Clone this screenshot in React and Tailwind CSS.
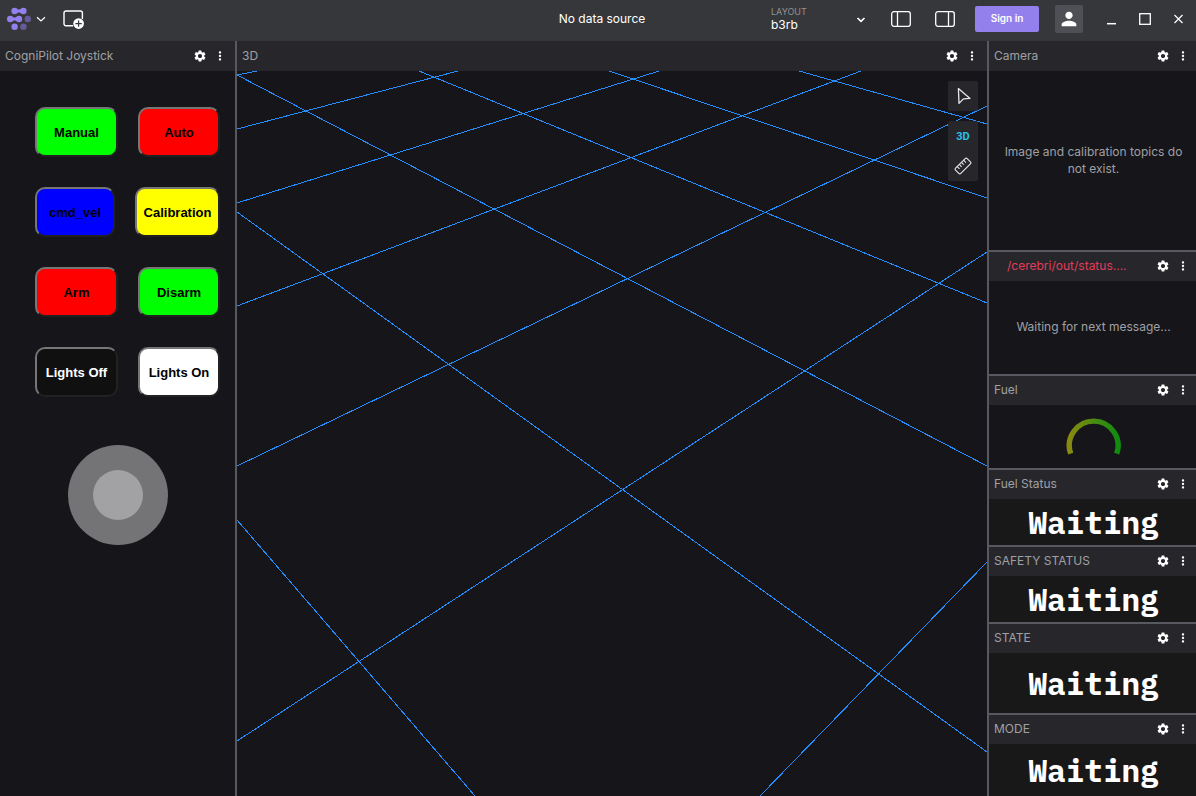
import React from "react";
import { MdSettings, MdMoreVert, MdPerson } from "react-icons/md";

function Chevron({ className = "" }) {
  return (
    <svg className={className} width="10" height="10" viewBox="0 0 10 10" fill="none" stroke="currentColor" strokeWidth="1.2" aria-hidden="true">
      <path d="M1 3.2 L5 7 L9 3.2" />
    </svg>
  );
}

function Logo() {
  return (
    <svg width="26" height="24" viewBox="0 0 26 24" aria-hidden="true">
      <g fill="#9480ed">
        <circle cx="8.6" cy="4" r="3.2" />
        <circle cx="17.4" cy="4" r="3.2" />
        <path d="M8.6 1.3 C11 3 14 3 17.4 1.3 V6.7 C14 5 11 5 8.6 6.7Z" />
        <circle cx="4.2" cy="12" r="3.2" />
        <circle cx="13" cy="12" r="3.2" />
        <path d="M4.2 9.3 C7 11 10 11 13 9.3 V14.7 C10 13 7 13 4.2 14.7Z" />
        <circle cx="8.6" cy="19.8" r="3.2" />
      </g>
      <g fill="#675a99">
        <circle cx="21.8" cy="12" r="3.2" />
        <circle cx="17.4" cy="19.8" r="3.2" />
      </g>
    </svg>
  );
}

function AddPanelIcon() {
  return (
    <svg width="22" height="20" viewBox="0 0 22 20" fill="none" aria-hidden="true">
      <path d="M10 15.8 H3 A2 2 0 0 1 1 13.8 V3 A2 2 0 0 1 3 1 H17.4 A2 2 0 0 1 19.4 3 V9" stroke="#fff" strokeWidth="1.4" />
      <circle cx="15.6" cy="13.6" r="5.3" fill="#fff" />
      <path d="M15.6 10.4 V16.8 M12.4 13.6 H18.8" stroke="#36373b" strokeWidth="1.2" />
    </svg>
  );
}

function SidebarIcon({ right = false }) {
  return (
    <svg width="20" height="16" viewBox="0 0 20 16" fill="none" stroke="#fff" strokeWidth="1.3" aria-hidden="true">
      <rect x="0.7" y="0.7" width="18.6" height="14.6" rx="2.2" />
      <path d={right ? "M13.5 1 V15" : "M6.5 1 V15"} />
    </svg>
  );
}

function TopBar() {
  return (
    <header className="grid h-[41px] shrink-0 grid-cols-[1fr_auto_1fr] items-center bg-[#36373b] pb-[3px]">
      <div className="flex items-center pl-1.5">
        <button aria-label="Menu" className="flex items-center gap-1">
          <Logo />
          <Chevron />
        </button>
        <button aria-label="Add panel" className="ml-[17px] pt-0.5">
          <AddPanelIcon />
        </button>
      </div>
      <div className="pb-0.5 pl-2">No data source</div>
      <div className="flex items-center justify-end pr-[13px]">
        <div className="relative mr-[25px] w-[95px]">
          <label htmlFor="layout" className="mb-0.5 block text-[9px] leading-[9px] text-[#929296]">LAYOUT</label>
          <select id="layout" className="block w-full appearance-none bg-transparent leading-[14px] outline-none">
            <option>b3rb</option>
          </select>
          <svg className="pointer-events-none absolute right-0 bottom-[7px]" width="10" height="10" viewBox="0 0 10 10" fill="none" stroke="#fff" strokeWidth="1.7" aria-hidden="true">
            <path d="M1.5 3 L5 6.4 L8.5 3" />
          </svg>
        </div>
        <button aria-label="Toggle left sidebar" className="mr-6"><SidebarIcon /></button>
        <button aria-label="Toggle right sidebar" className="mr-5"><SidebarIcon right /></button>
        <button className="mr-4 h-[26px] w-16 rounded-xs bg-[#9480ed] pb-px text-[10px] font-semibold">Sign in</button>
        <button aria-label="Account" className="mr-6 flex size-7 items-center justify-center rounded-xs bg-[#4f5055]">
          <MdPerson size={22} />
        </button>
        <button aria-label="Minimize" className="mr-[23px]">
          <svg width="9" height="14" viewBox="0 0 9 14" aria-hidden="true"><path d="M0 11.7 H9" stroke="#fff" strokeWidth="1.5" /></svg>
        </button>
        <button aria-label="Maximize" className="mr-[23px]">
          <svg width="12" height="12" viewBox="0 0 12 12" fill="none" aria-hidden="true"><rect x="0.7" y="0.7" width="10.6" height="10.6" stroke="#fff" strokeWidth="1.3" /></svg>
        </button>
        <button aria-label="Close">
          <svg width="9" height="10" viewBox="0 0 9 10" fill="none" aria-hidden="true"><path d="M0.5 1 L8.5 9 M8.5 1 L0.5 9" stroke="#fff" strokeWidth="1.2" /></svg>
        </button>
      </div>
    </header>
  );
}

function Panel({ title, error = false, className = "", barClass = "h-[29px] pb-px", bodyClass = "bg-[#15151a]", children }) {
  return (
    <section className={`flex min-h-0 min-w-0 basis-0 flex-col overflow-hidden ${className}`}>
      <div className={`flex shrink-0 items-center bg-[#27272b] pr-[5px] ${barClass} ${error ? "pl-[18px]" : "pl-[5px]"}`}>
        <h2 className={`min-w-0 flex-1 truncate pb-px ${error ? "text-[#e03c5c]" : "text-[#a0a0a4]"}`}>{title}</h2>
        <button aria-label={`${title} settings`} className="flex h-5 w-5 items-center justify-center"><MdSettings size={14} /></button>
        <button aria-label={`${title} menu`} className="flex h-5 w-5 items-center justify-center"><MdMoreVert size={14} /></button>
      </div>
      <div className={`min-h-0 flex-1 ${bodyClass}`}>{children}</div>
    </section>
  );
}

const joyButtons = [
  { label: "Manual", style: "min-w-[83px] bg-[#00ff00] text-black" },
  { label: "Auto", style: "min-w-[82px] bg-[#ff0000] text-black" },
  { label: "cmd_vel", style: "min-w-20 bg-[#0000ff] text-black" },
  { label: "Calibration", style: "min-w-[85px] bg-[#ffff00] text-black" },
  { label: "Arm", style: "min-w-[83px] bg-[#ff0000] text-black" },
  { label: "Disarm", style: "min-w-[82px] bg-[#00ff00] text-black" },
  { label: "Lights Off", style: "min-w-[83px] bg-[#101010] text-white" },
  { label: "Lights On", style: "min-w-[82px] bg-white text-black" },
];

function Joystick() {
  return (
    <div className="pt-9">
      <div className="grid grid-cols-2 gap-y-[30px] pr-[15px] pl-[35px]">
        {joyButtons.map((b, i) => (
          <button
            key={b.label}
            className={`h-[50px] rounded-[10px] border-2 border-t-[#767676] border-r-[#212121] border-b-[#212121] border-l-[#767676] px-[5px] font-['Liberation_Sans',Arial,sans-serif] text-[13px] font-bold ${i % 2 ? "justify-self-end" : "justify-self-start"} ${b.style}`}
          >
            {b.label}
          </button>
        ))}
      </div>
      <div className="mx-auto mt-12 flex size-[100px] items-center justify-center rounded-full bg-[#747476]">
        <div className="size-[50px] rounded-full bg-[#a2a2a4]" />
      </div>
    </div>
  );
}

const gridLines = [
  [237, 520, 475, 796],
  [237, 212, 987, 752],
  [237, 75, 987, 466],
  [419, 71, 987, 303],
  [609, 71, 987, 198],
  [799, 71, 987, 124],
  [237, 741, 987, 252],
  [237, 466, 987, 106],
  [237, 306, 861, 71],
  [237, 203, 659, 71],
  [237, 129, 458, 71],
  [237, 75, 257, 71],
  [760, 796, 987, 562],
];

function Scene() {
  return (
    <div className="relative h-full">
      <svg className="block h-full w-full" viewBox="237 71 750 725" preserveAspectRatio="none" aria-label="3D grid">
        <g stroke="#248eff" strokeWidth="1" shapeRendering="crispEdges">
          {gridLines.map(([x1, y1, x2, y2]) => (
            <line key={`${x1}-${y1}`} x1={x1} y1={y1} x2={x2} y2={y2} />
          ))}
        </g>
      </svg>
      <div className="absolute top-2.5 right-[9px] flex flex-col gap-2.5">
        <button aria-label="Select object" className="flex size-[30px] items-center justify-center rounded-xs bg-[#27272b]">
          <svg width="16" height="18" viewBox="0 0 16 18" fill="none" stroke="#e8e8ea" strokeWidth="1.3" strokeLinejoin="round" aria-hidden="true">
            <path d="M3.4 1.6 L15 11.4 L8.4 11.9 L4 16.4 Z" />
          </svg>
        </button>
        <div className="flex flex-col rounded-xs bg-[#27272b]">
          <button className="size-[30px] pt-px font-['Roboto',sans-serif] text-[11px] font-bold text-[#29bee7]">3D</button>
          <button aria-label="Measure" className="flex size-[30px] items-center justify-center">
            <svg width="18" height="18" viewBox="0 0 18 18" fill="none" stroke="#e8e8ea" strokeWidth="1.1" strokeLinejoin="round" aria-hidden="true">
              <g transform="rotate(-45 9 9)">
                <rect x="0.8" y="5.3" width="16.4" height="7.4" rx="1.4" />
                <path d="M4.5 5.3 V8.6 M7.5 5.3 V8.6 M10.5 5.3 V8.6 M13.5 5.3 V8.6" />
              </g>
            </svg>
          </button>
        </div>
      </div>
    </div>
  );
}

function Gauge() {
  return (
    <svg width="56" height="40" viewBox="0 0 56 40" fill="none" aria-label="Fuel gauge">
      <defs>
        <linearGradient id="fuel" x1="0" y1="0" x2="1" y2="0">
          <stop offset="0" stopColor="#878b10" />
          <stop offset="1" stopColor="#108c10" />
        </linearGradient>
      </defs>
      <path d="M4.7 36.7 A24.4 24.4 0 1 1 50.7 36.7" stroke="url(#fuel)" strokeWidth="5.4" />
    </svg>
  );
}

const centered = "flex items-center justify-center bg-[#15151a] text-center text-[#a0a0a4]";
const indicator =
  "flex items-center justify-center bg-[#181818] font-['IBM_Plex_Mono','Liberation_Mono',monospace] text-[31px] leading-none font-bold";

export default function App() {
  return (
    <div className="flex h-screen min-h-[600px] flex-col overflow-hidden bg-[#15151a] font-['Inter',sans-serif] text-[12px] leading-[17px] text-white">
      <TopBar />
      <main className="-mr-0.5 flex min-h-0 flex-1 gap-0.5 bg-[#585860]">
        <Panel title="CogniPilot Joystick" className="grow-[235]" barClass="h-[30px]"><Joystick /></Panel>
        <Panel title="3D" className="grow-[750]" barClass="h-[30px]"><Scene /></Panel>
        <div className="flex min-w-0 grow-[209] basis-0 flex-col gap-0.5">
          <Panel title="Camera" className="grow-[209]" barClass="h-[30px]" bodyClass={centered}>
            <p className="px-3 pb-0.5">Image and calibration topics do not exist.</p>
          </Panel>
          <Panel title="/cerebri/out/status...." error className="grow-[122]" bodyClass={centered}>
            <p className="pb-0.5">Waiting for next message...</p>
          </Panel>
          <Panel title="Fuel" className="grow-[92]" bodyClass={centered}><Gauge /></Panel>
          <Panel title="Fuel Status" className="grow-[75]" bodyClass={indicator}>Waiting</Panel>
          <Panel title="SAFETY STATUS" className="grow-[75]" bodyClass={indicator}>Waiting</Panel>
          <Panel title="STATE" className="grow-[89]" bodyClass={indicator}>Waiting</Panel>
          <Panel title="MODE" className="grow-[81]" bodyClass={indicator}>Waiting</Panel>
        </div>
      </main>
    </div>
  );
}
